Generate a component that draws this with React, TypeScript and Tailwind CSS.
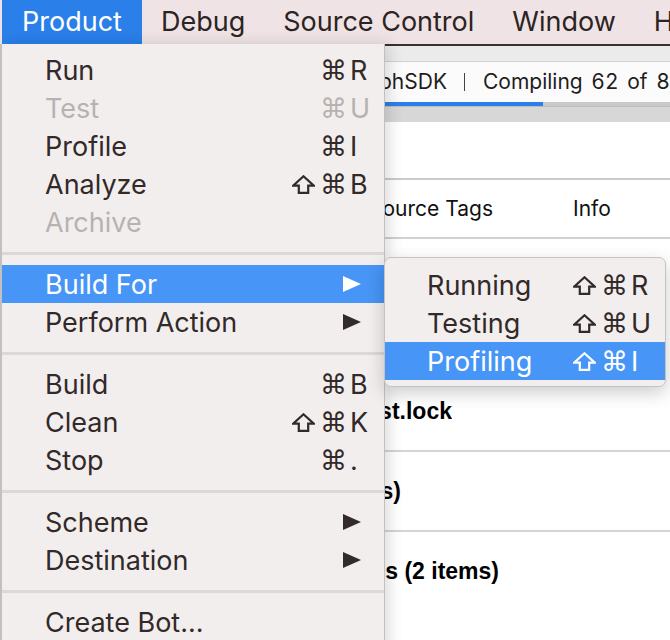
import React from "react";

type Row =
  | { sep: true }
  | {
      sep?: false;
      label: string;
      shift?: boolean;
      k?: string;
      disabled?: boolean;
      sub?: boolean;
      hl?: boolean;
    };

const mainItems: Row[] = [
  { label: "Run", k: "R" },
  { label: "Test", k: "U", disabled: true },
  { label: "Profile", k: "I" },
  { label: "Analyze", shift: true, k: "B" },
  { label: "Archive", disabled: true },
  { sep: true },
  { label: "Build For", sub: true, hl: true },
  { label: "Perform Action", sub: true },
  { sep: true },
  { label: "Build", k: "B" },
  { label: "Clean", shift: true, k: "K" },
  { label: "Stop", k: "." },
  { sep: true },
  { label: "Scheme", sub: true },
  { label: "Destination", sub: true },
  { sep: true },
  { label: "Create Bot..." },
];

const subItems: Row[] = [
  { label: "Running", shift: true, k: "R" },
  { label: "Testing", shift: true, k: "U" },
  { label: "Profiling", shift: true, k: "I", hl: true },
];

const FONT = { fontFamily: "Inter, 'DejaVu Sans', sans-serif" };
const SYM = { fontFamily: "'DejaVu Sans', sans-serif" };
const BOLD = { fontFamily: "'Liberation Sans', Arial, sans-serif" };

function Arrow({ white }: { white?: boolean }) {
  return (
    <svg width="18" height="16" viewBox="0 0 18 16" className="mr-[23px] shrink-0">
      <polygon points="0,0 18,8 0,16" fill={white ? "#ffffff" : "#332b2b"} />
    </svg>
  );
}

function ShiftIcon({ color }: { color: string }) {
  return (
    <svg width="23" height="19" viewBox="0 0 23 19" className="shrink-0">
      <path
        d="M11.5 1.3 L21.8 10.6 L16.2 10.6 L16.2 17.8 L6.8 17.8 L6.8 10.6 L1.2 10.6 Z"
        fill="none"
        stroke={color}
        strokeWidth="2.2"
        strokeLinejoin="miter"
      />
    </svg>
  );
}

function MenuRow({ row, pl }: { row: Row; pl: string }) {
  if (row.sep) {
    return (
      <div className="pt-[11px] pb-[10px]">
        <div className="h-[3px] bg-[#dcd8d8]" />
      </div>
    );
  }
  const color = row.hl
    ? "bg-[#4795f6] text-white"
    : row.disabled
    ? "text-[#b7b2b2]"
    : "text-[#322929]";
  const iconColor = row.hl ? "#ffffff" : row.disabled ? "#b7b2b2" : "#322929";
  return (
    <div className={`flex h-[38px] items-center ${pl} ${color}`}>
      <span className="flex-1 whitespace-nowrap text-[27px] leading-none">{row.label}</span>
      {row.k && (
        <span className="flex items-center text-[27px] leading-none">
          <span className="flex w-[70px] items-center justify-end gap-[5px]">
            {row.shift && <ShiftIcon color={iconColor} />}
            <span className="text-[27px]" style={SYM}>
              ⌘
            </span>
          </span>
          <span className="w-[37px] pl-[3px]">{row.k}</span>
        </span>
      )}
      {row.sub && <Arrow white={row.hl} />}
    </div>
  );
}

export default function App() {
  return (
    <div className="relative w-[670px] h-[640px] overflow-hidden bg-white" style={FONT}>
      {/* menu bar */}
      <div className="flex h-[44px] items-center bg-[#efe3e5] text-[27px] text-[#2c2323] whitespace-nowrap">
        <div className="ml-[2px] flex h-full items-center bg-[#2a7fe9] px-[20px] text-white">Product</div>
        <div className="px-[19px]">Debug</div>
        <div className="px-[19px]">Source Control</div>
        <div className="px-[19px]">Window</div>
        <div className="px-[19px]">Help</div>
      </div>

      {/* background window */}
      <div className="flex flex-col border-t-2 border-[#3a3131]">
        <div className="h-[15px] bg-[#ebebeb]" />
        <div className="h-px bg-[#d0d0d0]" />
        <div className="flex h-[40px] items-center bg-[#fbfbfb] text-[21px] text-[#1e1e1e] whitespace-nowrap">
          <span className="ml-[385px] flex w-[62px] shrink-0 justify-end overflow-hidden">GraphSDK</span>
          <span className="ml-[17px] h-[18px] w-px shrink-0 bg-[#444]" />
          <span className="ml-[18px] tabular-nums [word-spacing:3px]">Compiling 62 of 84 source files</span>
        </div>
        <div className="flex h-[4px] bg-[#c9c9c9]">
          <div className="w-[543px] bg-[#2a7fe9]" />
        </div>
        <div className="h-[16px] border-t border-[#bdbdbd] bg-[#d7d7d7]" />
        <div className="h-[56px] bg-white" />
        <div className="h-[2px] bg-[#cbcbcb]" />
        <div className="flex h-[57px] items-center text-[21px] text-[#111] whitespace-nowrap">
          <span className="ml-[385px] flex w-[108px] shrink-0 justify-end overflow-hidden">Resource Tags</span>
          <span className="ml-[80px]">Info</span>
        </div>
        <div className="h-[2px] bg-[#d0d0d0]" />
        <div className="h-[134px]" />
        <div className="flex h-[77px] items-center text-[23px] font-bold text-black whitespace-nowrap" style={BOLD}>
          <span className="ml-[385px] flex w-[67px] shrink-0 justify-end overflow-hidden">Manifest.lock</span>
        </div>
        <div className="h-[2px] bg-[#d4d4d4]" />
        <div className="flex h-[78px] items-center text-[23px] font-bold text-black whitespace-nowrap" style={BOLD}>
          <span className="ml-[385px] flex w-[16px] shrink-0 justify-end overflow-hidden">Targets (3 items)</span>
        </div>
        <div className="h-[2px] bg-[#d4d4d4]" />
        <div className="flex h-[78px] items-center text-[23px] font-bold text-black whitespace-nowrap" style={BOLD}>
          <span className="ml-[386px] flex w-[113px] shrink-0 justify-end overflow-hidden">Pods (2 items)</span>
        </div>
      </div>

      {/* Product menu */}
      <div className="absolute left-0 top-[44px] w-[385px] h-[620px] border-l-2 border-r border-[#c4c0c0] bg-[#f2eeee] pt-[7px] shadow-[4px_0_14px_rgba(0,0,0,0.14)]">
        {mainItems.map((r, i) => (
          <MenuRow key={i} row={r} pl="pl-[43px]" />
        ))}
      </div>

      {/* Build For submenu */}
      <div className="absolute left-[384px] top-[257px] w-[282px] rounded-[7px] border border-[#c6c2c2] bg-[#f2eeee] pt-[8px] pb-[6px] shadow-[0_6px_18px_rgba(0,0,0,0.2)]">
        {subItems.map((r, i) => (
          <MenuRow key={i} row={r} pl="pl-[42px]" />
        ))}
      </div>
    </div>
  );
}
